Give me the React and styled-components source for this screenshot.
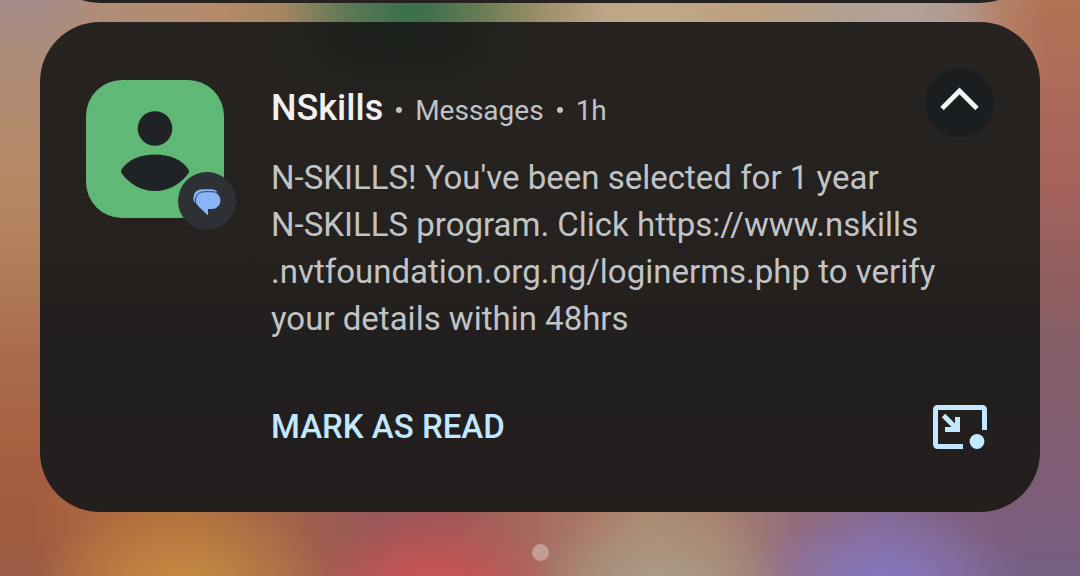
import React from 'react'
import styled, { createGlobalStyle } from 'styled-components'

const App = () => {
  return (
    <>
      <GlobalStyle />
      <Shade>
        <Peek>
          <PeekCard />
        </Peek>
        <Card>
          <Avatar>
            <PersonIcon viewBox="0 0 138 138" aria-hidden="true">
              <circle cx="69" cy="48.5" r="17.3" />
              <path d="M35.5 89.5C42 79.5 55 74.5 69 74.5S96 79.5 102.5 89.5Q103.6 91.3 102.5 93C95.5 103 84 111 69 111S42.5 103 35.5 93Q34.4 91.3 35.5 89.5Z" />
            </PersonIcon>
            <AppBadge>
              <svg width="58" height="58" viewBox="0 0 58 58" aria-hidden="true">
                <path d="M16.5 30.5C14 26 15.5 17.200 24 17.200H33Q37.500 17.200 39.500 20.500Z" fill="#8ab4f8" />
                <path d="M26.500 19.700H33.800A8.700 8.700 0 0 1 33.800 37.100H30V43.500L20.300 34.300Q17.500 31.500 17.500 28.500Q17.500 19.700 26.500 19.700Z" fill="#8ab4f8" />
                <path d="M17.500 31Q16.500 19.700 26.500 19.700H34Q38.500 19.700 40.500 22" fill="none" stroke="#2d4468" />
              </svg>
            </AppBadge>
          </Avatar>
          <Content>
            <Header>
              <Sender>NSkills</Sender>
              <Dot />
              <Meta>Messages</Meta>
              <Dot />
              <Meta>1h</Meta>
            </Header>
            <Message>
              N-SKILLS! You've been selected for 1 year
              <br />
              N-SKILLS program. Click https://www.nskills
              <br />
              .nvtfoundation.org.ng/loginerms.php to verify
              <br />
              your details within 48hrs
            </Message>
            <Actions>
              <TextButton type="button">MARK AS READ</TextButton>
              <IconButton type="button" aria-label="Open as bubble">
                <svg width="54" height="44" viewBox="0 0 54 44" fill="none" stroke="#c2e7ff" strokeWidth="5" aria-hidden="true">
                  <path d="M30 41.5H5Q2.5 41.5 2.5 39V5Q2.5 2.5 5 2.5H49Q51.5 2.5 51.5 5V25" />
                  <path d="M10.5 10.5L24 24M24.5 12V24.5H12" />
                  <circle cx="44" cy="36.5" r="7.4" fill="#c2e7ff" stroke="none" />
                </svg>
              </IconButton>
            </Actions>
          </Content>
          <Collapse type="button" aria-label="Collapse">
            <svg width="69" height="69" viewBox="0 0 69 69" fill="none" stroke="#f2f3f3" strokeWidth="4.8" aria-hidden="true">
              <path d="M17 40.5L34.5 23L52 40.5" />
            </svg>
          </Collapse>
        </Card>
        <PageDot />
      </Shade>
    </>
  )
}

export default App

const GlobalStyle = createGlobalStyle`
  * {
    box-sizing: border-box;
  }
  body {
    margin: 0;
    font-family: Roboto, "Liberation Sans", sans-serif;
  }
  button {
    border: 0;
    padding: 0;
    font-family: inherit;
    cursor: pointer;
  }
`

const Shade = styled.main`
  display: flex;
  flex-direction: column;
  min-height: 100vh;
  padding: 0 40px;
  background:
    radial-gradient(ellipse 150px 90px at 17% 102%, #c68b42, transparent) no-repeat,
    radial-gradient(ellipse 130px 80px at 40% 102%, #d15352, transparent) no-repeat,
    radial-gradient(ellipse 135px 85px at 61% 102%, #a99d8b, transparent) no-repeat,
    radial-gradient(ellipse 145px 85px at 82% 102%, #8579c4, transparent) no-repeat,
    linear-gradient(90deg, transparent 3%, #ac683f 10%, #b0703e 17%, #a0634a 27%, #97575a 35%, #9d5858 42%, #a66b5e 50%, #ad886e 60%, #a9826d 66%, #936b7c 74%, #84678f 82%, #7f5f7e 90%, transparent 95%) bottom / 100% 80px no-repeat,
    linear-gradient(90deg, transparent 4%, #b08d76 10%, #b58a6b 20%, #a58663 26%, #5f7856 32%, #3d704c 37%, #40714d 40%, #6e7e56 45%, #9c8e68 50%, #bea587 56%, #c0a886 61%, #bba081 70%, #b2a091 78%, #b0a399 84%, #b1988c 89%, #b47f67 93%, transparent 97%) top / 100% 80px no-repeat,
    linear-gradient(#b17355, #a9685a 22%, #a4625a 32%, #95605f 45%, #855d66 60%, #815c73 77%, #7c5c7b 90%, #735f83) right / 50% 100% no-repeat,
    linear-gradient(#a68c8b, #ae8d79 10%, #b48c6d 23%, #b5835f 40%, #aa6e4d 60%, #a66040 78%, #a35b40 90%, #9b5b46);
`

/* bottom edge of the notification above */
const Peek = styled.div`
  display: flex;
  align-items: flex-end;
  height: 3px;
  overflow: hidden;
`

const PeekCard = styled.div`
  flex: 1 0 auto;
  height: 120px;
  border-radius: 60px;
  background: #25221f;
`

const Card = styled.article`
  display: flex;
  align-items: flex-start;
  margin-top: 19px;
  padding: 46px 46px 61px;
  border-radius: 60px;
  background:
    radial-gradient(ellipse 160px 90px at 36% 0%, #1b211c, transparent),
    linear-gradient(#272320, #25211e 50%, #201e1e 72%, #241f1d);
`

const Avatar = styled.div`
  position: relative;
  flex: none;
  width: 138px;
  height: 138px;
  margin: 12px 47px 0 0;
  border-radius: 36px;
  background: #5fb875;
`

const PersonIcon = styled.svg`
  display: block;
  fill: #202326;
`

const AppBadge = styled.span`
  position: absolute;
  right: -12px;
  bottom: -12px;
  display: flex;
  width: 58px;
  height: 58px;
  border-radius: 50%;
  background: #2d3135;
`

const Content = styled.div`
  flex: 1;
  min-width: 0;
  padding-top: 17px;
`

const Header = styled.header`
  display: flex;
  align-items: baseline;
  gap: 13px;
  line-height: 46px;
`

const Sender = styled.h1`
  margin: 0;
  font-size: 36px;
  font-weight: 500;
  color: #f1f1f1;
`

const Meta = styled.span`
  font-size: 28px;
  color: #bfc4c8;
`

const Dot = styled.span`
  align-self: center;
  width: 6px;
  height: 6px;
  border-radius: 50%;
  background: #bfc4c8;
`

const Message = styled.p`
  margin: 20px 0 0;
  font-size: 33px;
  line-height: 47px;
  white-space: nowrap;
  color: #c0c4c7;
`

const Actions = styled.div`
  display: flex;
  align-items: center;
  justify-content: space-between;
  margin: 61px -62px 0 0;
`

const TextButton = styled.button`
  background: none;
  font-size: 33px;
  font-weight: 500;
  line-height: 48px;
  color: #c2e7ff;
`

const IconButton = styled.button`
  display: flex;
  background: none;
`

const Collapse = styled.button`
  display: flex;
  flex: none;
  width: 69px;
  height: 69px;
  border-radius: 50%;
  background: #1a1e20;
`

const PageDot = styled.span`
  align-self: center;
  width: 17px;
  height: 17px;
  margin: 32px 0 15px;
  border-radius: 50%;
  background: #c49d96;
`
